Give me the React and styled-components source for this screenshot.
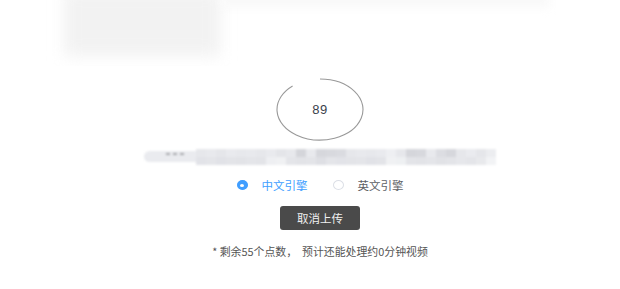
import React, { useState } from 'react';
import styled, { createGlobalStyle } from 'styled-components';

const GlobalStyle = createGlobalStyle`
  html, body {
    margin: 0;
    padding: 0;
    background: #fff;
  }
  body {
    font-family: "Liberation Sans", "Noto Sans CJK SC", sans-serif;
  }
`;

const Page = styled.div`
  width: 620px;
  height: 289px;
  overflow: hidden;
  background: #fff;
`;

const TopBar = styled.div`
  display: flex;
  align-items: flex-start;
  height: 66px;
  padding-left: 64px;
  overflow: hidden;
`;

const BlurBox = styled.div`
  flex: 0 0 ${props => props.w}px;
  height: ${props => props.h}px;
  margin-top: ${props => props.top}px;
  background: ${props => props.bg};
  filter: blur(${props => props.blur}px);
`;

const Main = styled.div`
  display: flex;
  flex-direction: column;
  align-items: center;
  padding-left: 20px;
`;

const Ring = styled.div`
  position: relative;
  width: 88px;
  height: 63px;
  margin-top: 12px;
  display: flex;
  align-items: center;
  justify-content: center;
`;

const RingSvg = styled.svg`
  position: absolute;
  left: 0;
  top: 0;
`;

const Percent = styled.span`
  position: relative;
  font-size: 13px;
  color: #3a3f4b;
  letter-spacing: 0.5px;
`;

const Mosaic = styled.div`
  display: flex;
  align-items: center;
  width: 352px;
  height: 17px;
  margin-top: 7px;
  filter: blur(0.8px);
`;

const Pill = styled.div`
  position: relative;
  flex: 0 0 52px;
  height: 11px;
  border-radius: 6px 0 0 6px;
  background: #eaebef;
`;

const Dash = styled.span`
  position: absolute;
  top: 2px;
  left: ${props => props.x}px;
  width: 4px;
  height: 2px;
  background: #a6a8ad;
`;

const Cells = styled.div`
  flex: 1;
  display: grid;
  grid-template-columns: repeat(30, 1fr);
  grid-template-rows: 8px 8px;
`;

const Cell = styled.div`
  background: ${props => props.c};
`;

const RadioRow = styled.div`
  display: flex;
  align-items: center;
  gap: 25px;
  margin-top: 13px;
  height: 14px;
`;

const RadioItem = styled.label`
  display: flex;
  align-items: center;
  gap: 14px;
  cursor: pointer;
  font-size: 11.5px;
  color: ${props => props.checked ? '#409eff' : '#606266'};
  font-family: "Noto Sans CJK SC", sans-serif;
`;

const Dot = styled.span`
  box-sizing: border-box;
  width: 11px;
  height: 10px;
  border-radius: 50%;
  border: 1px solid ${props => props.checked ? '#409eff' : '#dcdfe6'};
  background: ${props => props.checked ? '#409eff' : '#fff'};
  display: flex;
  align-items: center;
  justify-content: center;
  &::after {
    content: '';
    width: 4px;
    height: 3px;
    border-radius: 50%;
    background: #fff;
    display: ${props => props.checked ? 'block' : 'none'};
  }
`;

const CancelButton = styled.button`
  width: 80px;
  height: 24px;
  margin-top: 14px;
  border: none;
  border-radius: 3px;
  background: #4a4a4a;
  color: #f0f0f0;
  font-size: 11.5px;
  font-family: "Noto Sans CJK SC", sans-serif;
  cursor: pointer;
  padding: 0;
`;

const Note = styled.p`
  margin: 14px 0 0;
  font-size: 10.9px;
  line-height: 14px;
  color: #555;
  font-family: "Noto Sans CJK SC", sans-serif;
  white-space: pre;
`;

const topRow = [
  '#e6e7eb', '#e8e9ed', '#e5e6ea', '#e9eaee', '#e7e8ec', '#e8e9ed', '#e6e7eb', '#e9eaee',
  '#e4e5e9', '#e7e8ec', '#d4d5da', '#e8e9ed', '#d6d7dc', '#d8d9de', '#dadbe0', '#e6e7eb',
  '#e8e9ed', '#e7e8ec', '#e9eaee', '#eeeff2', '#e6e7eb', '#d5d6db', '#d7d8dd', '#e8e9ed',
  '#dcdde2', '#d6d7dc', '#e6e7eb', '#eaebef', '#e5e6ea', '#ecedf0',
];

const bottomRow = [
  '#e2e3e8', '#e4e5e9', '#e1e2e7', '#e3e4e8', '#e2e3e7', '#e4e5e9', '#e3e4e8', '#eeeff2',
  '#f0f1f3', '#e4e5e9', '#e2e3e7', '#e3e4e8', '#dedfe4', '#e4e5e9', '#e2e3e8', '#e3e4e8',
  '#e4e5e9', '#e1e2e7', '#e3e4e8', '#f0f1f3', '#eef0f2', '#e3e4e8', '#e2e3e7', '#e4e5e9',
  '#e1e2e6', '#e3e4e8', '#e6e7eb', '#e4e5e9', '#e8e9ec', '#f2f3f5',
];

const progress = 89;

function ProgressRing({ value }) {
  const cx = 44;
  const cy = 31.5;
  const rx = 43;
  const ry = 30.5;
  const angle = (value / 100) * Math.PI * 2;
  const ex = cx + rx * Math.sin(angle);
  const ey = cy - ry * Math.cos(angle);
  const large = value > 50 ? 1 : 0;

  return (
    <Ring>
      <RingSvg width="88" height="63" viewBox="0 0 88 63">
        <path
          d={`M${cx} ${cy - ry} A${rx} ${ry} 0 ${large} 1 ${ex.toFixed(2)} ${ey.toFixed(2)}`}
          fill="none"
          stroke="#999"
          strokeWidth="1.1"
        />
      </RingSvg>
      <Percent>{value}</Percent>
    </Ring>
  );
}

export default function App() {
  const [engine, setEngine] = useState('zh');

  return (
    <Page>
      <GlobalStyle />
      <TopBar>
        <BlurBox w={156} h={66} top={-10} bg="#f2f2f2" blur={8} />
        <BlurBox w={330} h={16} top={-8} bg="#f9f9f9" blur={4} />
      </TopBar>
      <Main>
        <ProgressRing value={progress} />
        <Mosaic>
          <Pill>
            <Dash x={22} />
            <Dash x={29} />
            <Dash x={36} />
          </Pill>
          <Cells>
            {topRow.map((c, i) => <Cell key={`t${i}`} c={c} />)}
            {bottomRow.map((c, i) => <Cell key={`b${i}`} c={c} />)}
          </Cells>
        </Mosaic>
        <RadioRow>
          <RadioItem checked={engine === 'zh'} onClick={() => setEngine('zh')}>
            <Dot checked={engine === 'zh'} />
            中文引擎
          </RadioItem>
          <RadioItem checked={engine === 'en'} onClick={() => setEngine('en')}>
            <Dot checked={engine === 'en'} />
            英文引擎
          </RadioItem>
        </RadioRow>
        <CancelButton>取消上传</CancelButton>
        <Note>* 剩余55个点数，  预计还能处理约0分钟视频</Note>
      </Main>
    </Page>
  );
}
